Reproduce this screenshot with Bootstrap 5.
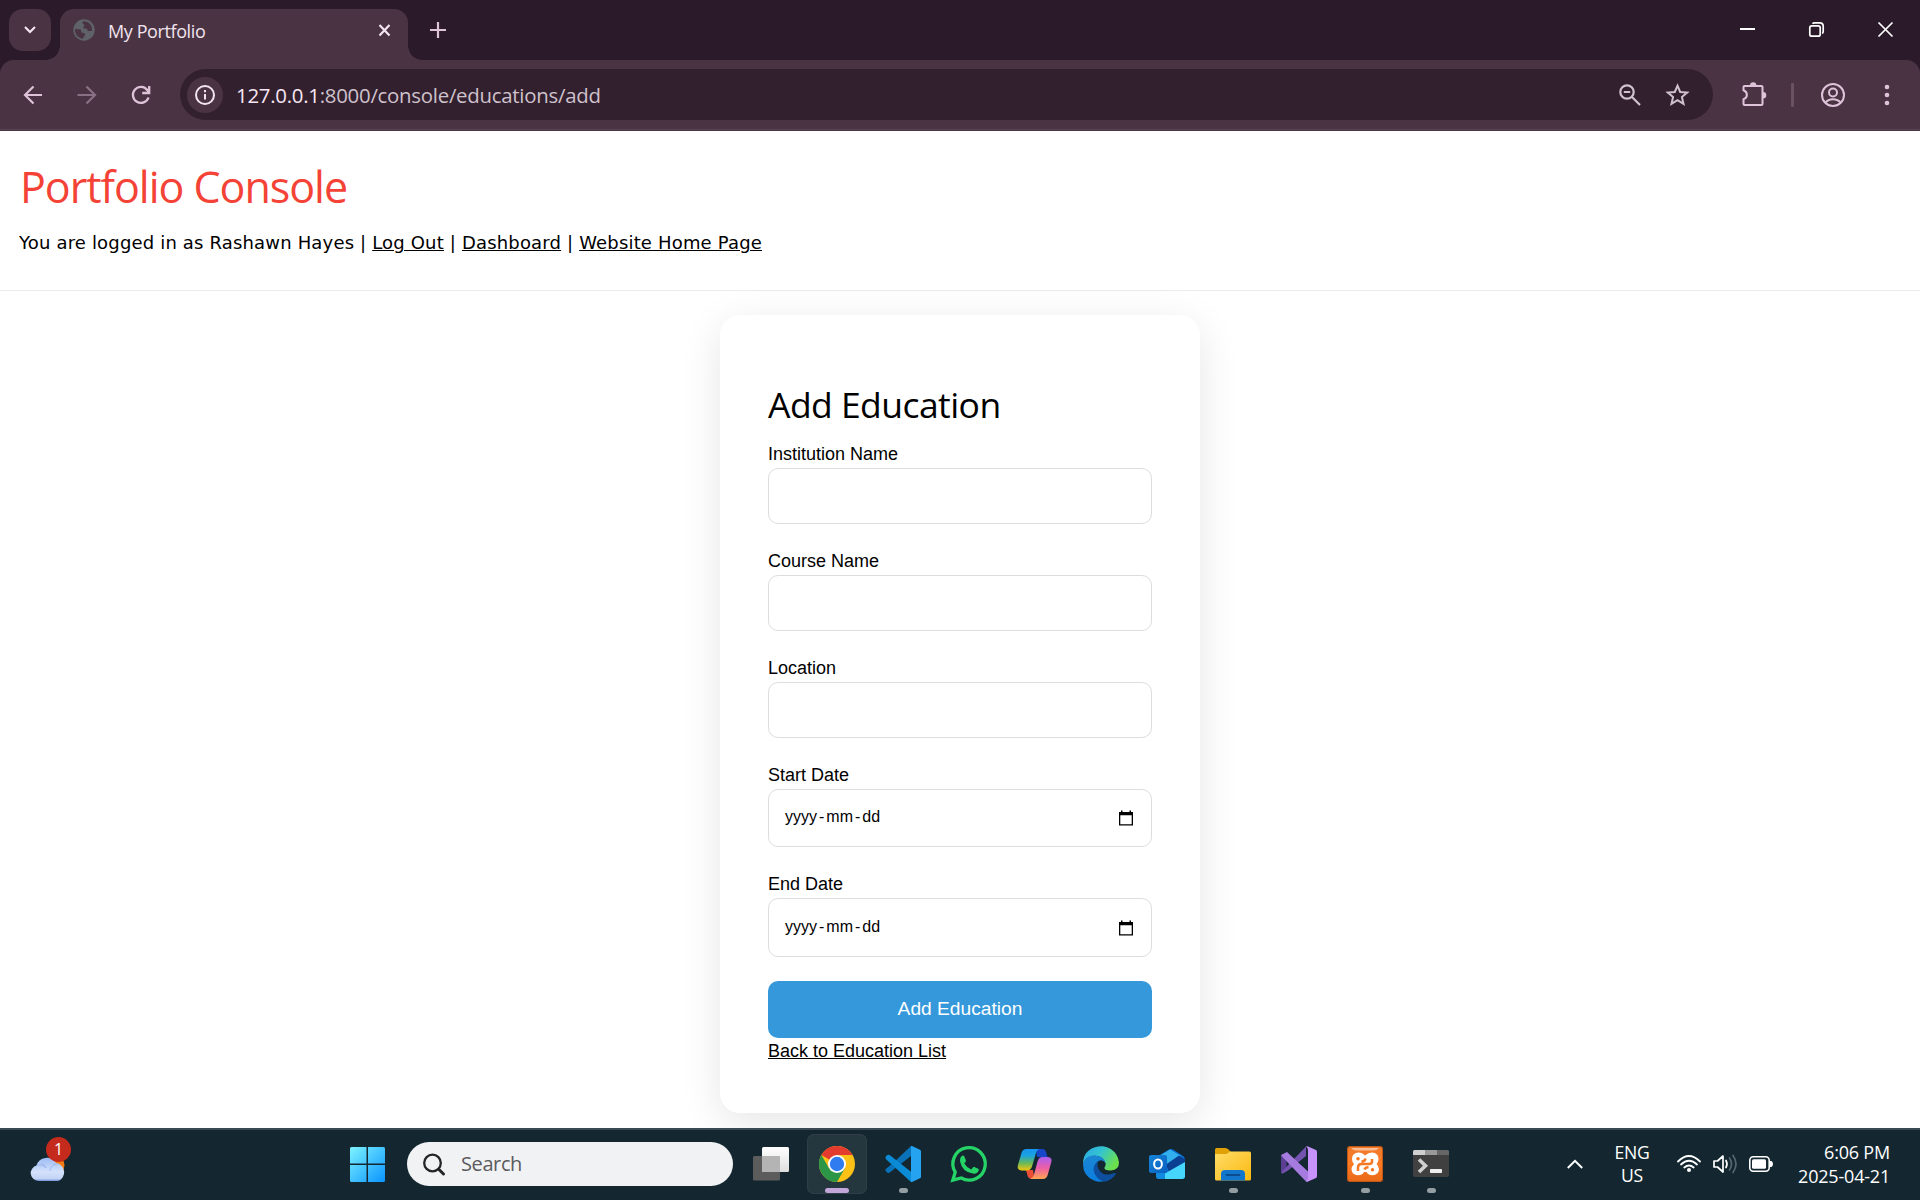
<!DOCTYPE html>
<html lang="en">
<head>
<meta charset="utf-8">
<meta name="viewport" content="width=device-width, initial-scale=1">
<title>My Portfolio</title>
<link href="https://cdn.jsdelivr.net/npm/bootstrap@5.3.0/dist/css/bootstrap.min.css" rel="stylesheet">
<style>
body{width:1920px;height:1200px;overflow:hidden;background:#fff;color:#000;font-family:"Open Sans","Noto Sans",sans-serif}
svg{display:block;flex:none;overflow:visible}
/* browser frame */
.tabstrip{height:60px;background:#2b1a29;padding:9px 0 0 9px}
.tab-search{width:42px;height:42px;border-radius:14px;background:#4a3444;margin-right:9px}
.tab-active{width:348px;height:51px;background:#4a3444;border-radius:14px 14px 0 0;padding:0 17px 0 13px;color:#f1e3ee;position:relative}
.tab-active::before,.tab-active::after{content:"";position:absolute;bottom:0;width:14px;height:14px}
.tab-active::before{left:-14px;background:radial-gradient(circle at 0 0,transparent 13.5px,#4a3444 14px)}
.tab-active::after{right:-14px;background:radial-gradient(circle at 100% 0,transparent 13.5px,#4a3444 14px)}
.tab-icon{margin-top:10px}
.tab-title{font-size:18px;letter-spacing:-.4px;line-height:24px;padding-top:3px;margin:7px 0 0 13px}
.tab-close{margin-top:15px}
.tab-new{margin:13px 0 0 22px}
.win-ctl{gap:54px;padding:13px 27px 0 0}
.toolbar-shell{height:71px;background:#2b1a29}
.toolbar{height:71px;background:#4a3444;border-radius:14px 14px 0 0;box-shadow:inset 0 -1px 0 #4a3444,inset 0 -2px 0 #594453;padding:9px 0 0}
.nav-icons{width:180px;padding-left:21px;gap:30px;height:51px}
.omnibox{width:1533px;height:51px;border-radius:26px;background:#33202f;padding:0 23px 0 7px}
.omni-actions{gap:25px}
.site-info{width:36px;height:36px;border-radius:50%;background:#4a3444}
.url{font-size:20.4px;letter-spacing:-.26px;line-height:28px;color:#cfc2cc;margin-left:13px}
.url b{font-weight:400;color:#f7e6f3}
.right-icons{width:207px;height:51px;padding-left:29px}
.tool-sep{width:3px;height:24px;background:#6a5263;border-radius:1px;margin:0 27px 0 24px}
.menu-dots{margin-left:39px}
/* page */
.site-page{height:997px;overflow:hidden}
.site-head{height:160px;padding:26px 20px 0;border-bottom:1px solid #e9ecec}
.site-head h1{font-size:43px;line-height:60px;letter-spacing:-1.02px;color:#f44336;margin:0 0 13px;font-weight:400}
.site-head p{font:18px/26px "DejaVu Sans",Verdana,sans-serif;letter-spacing:.17px;margin:0 0 0 -1px;white-space:nowrap}
.site-page a{color:#000;text-decoration:underline}
.edu-card{width:480px;height:798px;margin:24px auto 0;padding:48px;border-radius:20px;background:#fff;box-shadow:0 10px 40px rgba(0,0,0,.1);font-family:"Liberation Sans",Arial,sans-serif;font-size:18px;line-height:27px}
.edu-card h2{font:400 35.5px/48px "Open Sans",sans-serif;letter-spacing:-.55px;margin:17px 0 13px;white-space:nowrap}
.edu-card .form-label{display:block;margin:0;line-height:27px}
.edu-card .form-control{height:56px;border:1px solid #ddd;border-radius:10px;margin-bottom:24px;padding:0 18px 0 15px;font-size:16px;line-height:20px;color:#000}
.edu-card .date-a{height:58px;padding-bottom:3px}
.edu-card .date-b{height:59px;padding-bottom:2px}
.date-a svg,.date-b svg{margin-top:2px}
.date-text span{padding:0 1px}
.btn-add{height:57px;border:0;border-radius:10px;background:#3498db;color:#fff;font-size:19.2px;padding:0;display:block}
.btn-add:hover{background:#3498db;color:#fff}
/* taskbar */
.taskbar{height:72px;background:#142730;border-top:2px solid #3b4a52;color:#fff;padding-bottom:2px}
.icon-defs{position:absolute}
.zone-left{width:350px;padding:0 0 0 30px;height:70px}
.weather{width:37px;height:70px}
.weather-badge{position:absolute;left:16px;top:8px;width:25px;height:25px;border-radius:50%;background:#c42b1c;font-size:16px;line-height:24px;text-align:center}
.search-pill{width:326px;height:44px;border-radius:22px;background:#f1f2f4;margin:0 14px 0 22px;padding-left:16px;color:#5b5b5d;font-size:20px;letter-spacing:-.4px}
.search-pill span{margin-left:16px;line-height:26px}
.app-slot{width:60px;height:60px;border-radius:7px;margin-right:6px;position:relative}
.app-slot:first-child{margin-left:-6px}
.app-slot.active{background:#24363e;box-shadow:inset 0 0 0 1px #303f47}
.app-slot.run::after,.app-slot.active::after{content:"";position:absolute;left:26px;bottom:1px;width:9px;height:5px;border-radius:3px;background:#949da1}
.app-slot.active::after{left:18px;width:24px;background:#c3a6d9}
.tray{font-size:18px;letter-spacing:-.2px;padding-right:30px}
.lang{width:60px;margin:0 15px 0 19px;text-align:center;line-height:23px;font-size:17.6px;letter-spacing:-.3px}
.clock{width:117px;text-align:right;line-height:24px}
.tray-gap{margin-left:12px}
</style>
<script src="https://cdn.jsdelivr.net/npm/bootstrap@5.3.0/dist/js/bootstrap.bundle.min.js"></script>
</head>
<body>
<div class="tabstrip d-flex align-items-start">
  <div class="tab-search d-flex align-items-center justify-content-center">
    <svg width="12" height="8" viewBox="0 0 12 8" fill="none" stroke="#f3e5f0" stroke-width="2.2"><path d="M1 1l5 5 5-5"/></svg>
  </div>
  <div class="tab-active d-flex align-items-start">
    <svg class="tab-icon" width="22" height="22" viewBox="0 0 22 22"><circle cx="11" cy="11" r="10.7" fill="#5f6368"/><path d="M2.400 9.600C4 10.800 6 9.700 7.300 10.500c1.800 1 .2 2.300 1.700 3.100 1.500.8 3.300.3 3.100 2.200-.2 1.700-2 1.500-2 3.900C5.500 19.400 2 15.500 2 11zM10.300 2.200C9 3.600 9.500 5 10.600 5.200c1 .3 1 2.200-.1 2.500-.9.3-.5 2 1 1.800 1.700-.2 2.700.2 2.800 1.500.1 1.600 2.700 1.100 4.800.8C19.600 6.200 15.600 2 10.300 2.200z" fill="#4a3444"/></svg>
    <div class="tab-title flex-grow-1">My Portfolio</div>
    <svg class="tab-close" width="13" height="13" viewBox="0 0 13 13" stroke="#f3e5f0" stroke-width="2.200"><path d="M1.500 1l10 10.500M11.500 1l-10 10.500"/></svg>
  </div>
  <svg class="tab-new" width="16" height="16" viewBox="0 0 16 16" stroke="#dfc3d8" stroke-width="2.200"><path d="M8 0v16M0 8h16"/></svg>
  <div class="win-ctl ms-auto d-flex">
    <svg width="15" height="15" viewBox="0 0 15 15"><path d="M0 7h15" stroke="#fff" stroke-width="2"/></svg>
    <svg width="15" height="15" viewBox="0 0 15 15" fill="none" stroke="#fff" stroke-width="1.700"><rect x=".8" y="3.800" width="10.400" height="10.400" rx="2"/><path d="M3.500 1.700Q4.200.8 5.500.8h5.200q3.500 0 3.500 3.500v5.200q0 1.300-1 2"/></svg>
    <svg width="15" height="15" viewBox="0 0 15 15" stroke="#fff" stroke-width="1.700"><path d="M.5.5l14 14M14.500.5l-14 14"/></svg>
  </div>
</div>
<div class="toolbar-shell"><div class="toolbar d-flex">
  <div class="nav-icons d-flex align-items-center">
    <svg width="24" height="24" viewBox="0 0 24 24" fill="none" stroke="#dfc3d8" stroke-width="2.200"><path d="M21 12H4.500M12.500 3.500L4 12l8.500 8.500"/></svg>
    <svg width="24" height="24" viewBox="0 0 24 24" fill="none" stroke="#8a7084" stroke-width="2.200"><path d="M2.500 12H20M11.500 3.500L20 12l-8.500 8.500"/></svg>
    <svg width="24" height="24" viewBox="0 0 24 24" fill="none" stroke="#dfc3d8" stroke-width="2.300"><path d="M19.500 14.500A8 8 0 1 1 18.400 7.200l1.200 2"/><path d="M20.200 3v7h-7"/></svg>
  </div>
  <div class="omnibox d-flex align-items-center">
    <div class="site-info d-flex align-items-center justify-content-center"><svg width="20" height="20" viewBox="0 0 20 20" fill="none" stroke="#f3e5f0" stroke-width="2"><circle cx="10" cy="10" r="9"/><path d="M10 9v5.500M10 5v2.200"/></svg></div>
    <div class="url"><b>127.0.0.1</b>:8000/console/educations/add</div>
    <div class="omni-actions d-flex ms-auto align-items-center">
      <svg width="22" height="22" viewBox="0 0 22 22" fill="none" stroke="#cfc2cc" stroke-width="2.200"><circle cx="8" cy="8" r="6.700"/><path d="M13 13l8 8M4.800 8h6.400"/></svg>
      <svg width="24" height="24" viewBox="0 0 24 24" fill="none" stroke="#cfc2cc" stroke-width="2"><path d="M11.500 2.700l2.700 6.300 7 .6-5.300 4.500 1.600 6.700-6-3.600-6 3.600 1.600-6.700L1.800 9.600l7-.6z"/></svg>
    </div>
  </div>
  <div class="right-icons d-flex align-items-center">
    <svg width="25" height="25" viewBox="0 0 25 25" fill="none" stroke="#dfc3d8" stroke-width="2"><path d="M2.500 4H19.500a1 1 0 0 1 1 1V22a1 1 0 0 1-1 1H2.500q-1 0-1-1v-4.800c4.500-1.300 4.500-7.400 0-9V5q0-1 1-1z"/><path d="M8 3.500a3.200 3.200 0 0 1 6.400 0zM21 10a3.300 3.300 0 0 1 0 6.600z" fill="#dfc3d8" stroke="none"/></svg>
    <div class="tool-sep"></div>
    <svg width="24" height="24" viewBox="0 0 24 24" fill="none" stroke="#dfc3d8" stroke-width="2"><circle cx="12" cy="12" r="11"/><circle cx="12" cy="9.500" r="4"/><path d="M4.500 19.500c3.500-4.500 11.500-4.500 15 0"/></svg>
    <svg class="menu-dots" width="6" height="22" viewBox="0 0 6 22" fill="#dfc3d8"><circle cx="3" cy="3" r="2.300"/><circle cx="3" cy="11" r="2.300"/><circle cx="3" cy="19" r="2.300"/></svg>
  </div>
</div></div>

<div class="site-page">
  <header class="site-head">
    <h1>Portfolio Console</h1>
    <p>You are logged in as Rashawn Hayes | <a href="#">Log Out</a> | <a href="#">Dashboard</a> | <a href="#">Website Home Page</a></p>
  </header>
  <section class="edu-card">
    <h2>Add Education</h2>
    <form>
      <label class="form-label" for="institution">Institution Name</label>
      <input class="form-control" id="institution" type="text">
      <label class="form-label" for="course">Course Name</label>
      <input class="form-control" id="course" type="text">
      <label class="form-label" for="location">Location</label>
      <input class="form-control" id="location" type="text">
      <label class="form-label">Start Date</label>
      <div class="form-control date-a d-flex align-items-center justify-content-between"><div class="date-text"><span>yyyy</span><span>-</span><span>mm</span><span>-</span><span>dd</span></div>
        <svg width="14" height="16" viewBox="0 0 14 16"><path d="M0 2h2V.5h1.500V2h7V.5H12V2h2v13.500H0zM1.300 5.300v8.900h11.400V5.300z" fill-rule="evenodd"/></svg></div>
      <label class="form-label">End Date</label>
      <div class="form-control date-b d-flex align-items-center justify-content-between"><div class="date-text"><span>yyyy</span><span>-</span><span>mm</span><span>-</span><span>dd</span></div>
        <svg width="14" height="16" viewBox="0 0 14 16"><path d="M0 2h2V.5h1.500V2h7V.5H12V2h2v13.500H0zM1.300 5.300v8.900h11.400V5.300z" fill-rule="evenodd"/></svg></div>
      <button class="btn btn-add w-100" type="button">Add Education</button>
    </form>
    <a href="#" class="d-block">Back to Education List</a>
  </section>
</div>

<footer class="taskbar d-flex align-items-center">
  <svg class="icon-defs" width="0" height="0"><defs>
    <linearGradient id="gWin" x1="0" y1="0" x2="1" y2="1"><stop offset="0" stop-color="#7df3ff"/><stop offset="1" stop-color="#0a94ff"/></linearGradient>
    <linearGradient id="gCloud" x1="0" y1="0" x2="0" y2="1"><stop offset="0" stop-color="#9dbcf5"/><stop offset=".6" stop-color="#d3e1fb"/><stop offset=".9" stop-color="#c3d3f5"/><stop offset="1" stop-color="#6f92da"/></linearGradient>
    <linearGradient id="gTv" x1="0" y1="0" x2="0" y2="1"><stop offset="0" stop-color="#fff"/><stop offset="1" stop-color="#dedede"/></linearGradient>
    <linearGradient id="gCopA" x1="0" y1="0" x2="0" y2="1"><stop offset="0" stop-color="#1894f0"/><stop offset=".3" stop-color="#19a3e0"/><stop offset=".65" stop-color="#67b95a"/><stop offset="1" stop-color="#f5c60c"/></linearGradient>
    <linearGradient id="gCopB" x1="0" y1="0" x2="0" y2="1"><stop offset="0" stop-color="#a85ef0"/><stop offset=".5" stop-color="#ee5fa5"/><stop offset="1" stop-color="#ffa44f"/></linearGradient>
    <linearGradient id="gEdA" x1="0" y1="0" x2="1" y2=".5"><stop offset="0" stop-color="#2aa7e8"/><stop offset=".5" stop-color="#34c4cf"/><stop offset="1" stop-color="#6be04d"/></linearGradient>
    <linearGradient id="gEdB" x1="0" y1="0" x2="0" y2="1"><stop offset="0" stop-color="#1b86d2"/><stop offset="1" stop-color="#0a7fe0"/></linearGradient>
    <linearGradient id="gFold" x1="0" y1="0" x2="1" y2="1"><stop offset="0" stop-color="#ffdc68"/><stop offset="1" stop-color="#fbb910"/></linearGradient>
    <linearGradient id="gXam" x1="0" y1="0" x2="0" y2="1"><stop offset="0" stop-color="#f07a2d"/><stop offset=".5" stop-color="#fb7a24"/><stop offset="1" stop-color="#e96a18"/></linearGradient>
    <linearGradient id="gOut" x1="0" y1="0" x2="1" y2="1"><stop offset="0" stop-color="#1684d8"/><stop offset="1" stop-color="#0a5fc0"/></linearGradient>
  </defs></svg>
  <div class="zone-left"><div class="weather position-relative">
    <svg width="37" height="70" viewBox="0 0 37 70"><circle cx="25" cy="36" r="9.500" fill="#f57c0f"/><path d="M9 52a8.800 8 0 0 1-2.500-15.500A10.800 10.800 0 0 1 26 34 9.300 9.300 0 0 1 28 52z" fill="url(#gCloud)"/><path d="M6 36.500c4-1.200 8 0 10 2.500-.5-2.500-3-4.300-5-4.300M20 42c0-5 4-7 7.500-7" fill="none" stroke="#8eaced" stroke-width="1" opacity=".7"/></svg>
    <span class="weather-badge">1</span>
  </div></div>
  <svg width="35" height="35" viewBox="0 0 35 35"><path d="M1.500 0H16.500V16.500H0V1.500Q0 0 1.500 0zM18 0H33.500Q35 0 35 1.500V16.500H18zM0 18H16.500V35H1.500Q0 35 0 33.500zM18 18H35V33.500Q35 35 33.500 35H18z" fill="url(#gWin)"/></svg>
  <div class="search-pill d-flex align-items-center"><svg width="22" height="23" viewBox="0 0 22 23" fill="none" stroke="#252525" stroke-width="2.300" stroke-linecap="round"><circle cx="9.500" cy="10" r="8.300"/><path d="M16 16.500l4.500 4.500" stroke-width="3"/></svg><span>Search</span></div>
  <div class="d-flex">
    <div class="app-slot"><svg width="60" height="60" viewBox="0 0 60 60"><g transform="translate(12 13)"><rect x="0" y="9" width="27" height="24.500" rx="1.500" fill="#5c5c5c"/><rect x="9" y="0" width="27" height="25" rx="1.500" fill="url(#gTv)"/><path d="M9 9h18v16H9z" fill="#b4b4b4"/></g></svg></div>
    <div class="app-slot active"><svg width="60" height="60" viewBox="0 0 60 60"><g transform="translate(12 12)"><circle cx="18" cy="18" r="18" fill="#fbc116"/><path d="M18 18L2.400 9A18 18 0 0 1 33.600 9H18z" fill="#e33b2e"/><path d="M2.400 9A18 18 0 0 0 18 36L25.800 22.500 18 18 10.200 22.500z" fill="#2c9647"/><circle cx="18" cy="18" r="9" fill="#fff"/><circle cx="18" cy="18" r="7.200" fill="#2f7cf0"/></g></svg></div>
    <div class="app-slot run"><svg width="60" height="60" viewBox="0 0 60 60"><g transform="translate(12 12)"><path d="M26 0L7 18 1 22.700Q-.2 24 .8 25.300L2.500 26.700Q3.700 27.500 5 26.300L26 10z" fill="#0a72b8"/><path d="M1 10.300L2.500 9Q4 8.500 5 9.300L26 25.700V36L1 13.300Q-.3 11.800 1 10.300z" fill="#0b8ad6"/><path d="M26 0q.8-.3 1.500.2L35 3.700q1 .5 1 1.500v25.600q0 1-1 1.500L27.500 35.800q-.8.400-1.500 0z" fill="#25a2f0"/></g></svg></div>
    <div class="app-slot"><svg width="60" height="60" viewBox="0 0 60 60"><g transform="translate(12 12)"><path d="M1.800 34.200L4.200 26.200A16.200 16.200 0 1 1 10.200 32z" fill="none" stroke="#25d366" stroke-width="3.300"/><path d="M12 9.500q.8 0 1.200.8l1.700 4q.3.800-.3 1.500l-1.300 1.600q2.500 4.300 7 6l1.800-2.200q.5-.6 1.300-.3l3.800 1.900q.8.400.6 1.200-.8 3.500-5 3.700Q11 26.500 9 15q0-5 3-5.500z" fill="#25d366"/></g></svg></div>
    <div class="app-slot"><svg width="60" height="60" viewBox="0 0 60 60"><g transform="translate(13 15)"><path d="M18 0H24.500Q27 0 28 3l1.500 5H19z" fill="#1747c8"/><path d="M8 21H15L16.500 30H14Q10.500 30 9.500 26.500z" fill="#e94f35"/><path d="M8.500 0H21Q18.800 1.200 18 4L14 17.500Q12.700 21.500 9 21.500H3.500Q-1 21-.2 16.500L3.500 4Q4.700 0 8.500 0z" fill="url(#gCopA)"/><path d="M25 30H12.500Q15 29 16 25.500L19.700 12Q21 8 24.500 8H30Q34.500 8.500 33.300 13L29.700 26Q28.500 30 25 30z" fill="url(#gCopB)"/></g></svg></div>
    <div class="app-slot"><svg width="60" height="60" viewBox="0 0 60 60"><g transform="translate(12 12)"><path d="M0 18Q0 5 12 1.200A18 18 0 0 1 36 16.500Q36 24 28 24.500 20.500 24.500 21.500 21.500 23.500 19.500 22.500 17 19 8 8.500 10 2 12 0 18z" fill="url(#gEdA)"/><path d="M0 18Q1.500 9.500 11.500 9.400 21 9.500 22.500 17 19.500 13 15.500 15 10.500 18.500 12.500 25.500 15 32 22 34.500 17.500 37 11 34.500 0 30 0 18z" fill="url(#gEdB)"/><path d="M15.500 15Q8.500 19 11.500 27.500 14.500 34 21 35.700 28 35 33 28 33 26.500 31.500 27 20 31.500 15.500 23 13.500 18.500 15.500 15z" fill="#0d4f9e"/></g></svg></div>
    <div class="app-slot"><svg width="60" height="60" viewBox="0 0 60 60"><g transform="translate(12 12)"><path d="M7 14Q7 11.500 9 10L20 3.500Q22 2.500 24 3.500L34 10Q36 11.500 36 14V30Q36 33 33 33H10Q7 33 7 30z" fill="#0b6fd0"/><path d="M12 9L21 3.500 32 10 17 19z" fill="#32b0ee"/><path d="M17 18.500L30 9.500 36 13.500V17L20 25.500z" fill="#0a3f91"/><path d="M36 16L15 28 9 32.500 11 33H33Q36 33 36 30z" fill="#46d6fb"/><path d="M7 20L16 27 16 33H10Q7 33 7 30z" fill="#118ae0"/><rect y="9" width="18" height="18" rx="2" fill="url(#gOut)"/><ellipse cx="9" cy="18" rx="3.900" ry="4.600" fill="none" stroke="#fff" stroke-width="2"/></g></svg></div>
    <div class="app-slot run"><svg width="60" height="60" viewBox="0 0 60 60"><g transform="translate(12 14)"><path d="M0 1.500Q0 0 1.500 0H10.500Q12 0 13.500 1.500L16 4V12H0z" fill="#e0a106"/><path d="M0 6H11Q12 6 13 5L15 3.500H34.500Q36 3.500 36 5V31Q36 32.500 34.500 32.500H1.500Q0 32.500 0 31z" fill="url(#gFold)"/><path d="M6 32.500V26Q6 22 10 22H26Q30 22 30 26V32.500z" fill="#1176cc"/><path d="M11.500 27h13" stroke="#0b4b8e" stroke-width="1.800" stroke-linecap="round"/></g></svg></div>
    <div class="app-slot"><svg width="60" height="60" viewBox="0 0 60 60"><g transform="translate(12 12)"><path d="M0 9.500L5.500 14V22.500L0 26.500z" fill="#5a3e92"/><path d="M0 26.500L25 .5V10L7 24.500 1.500 27.800z" fill="#7452b0"/><path d="M0 9.500Q.5 8.500 1.500 8.200L6 6 27 25.500V35.500L25 35.500z" fill="#a57be0"/><path d="M25 .5Q26 0 27 .5L35 4Q36 4.700 36 6V30Q36 31.500 35 32L27 35.600Q26 36 25 35.500 27 34.500 27 32V4Q27 1.500 25 .5z" fill="#c892fb"/></g></svg></div>
    <div class="app-slot run"><svg width="60" height="60" viewBox="0 0 60 60"><g transform="translate(12 12)"><rect width="36" height="36" rx="3" fill="#bd5716"/><rect x="1" y="1" width="34" height="34" rx="2.500" fill="url(#gXam)"/><path d="M4 2H32Q30 4.500 26 4.500H10Q6 4.500 4 2z" fill="#f9bc93"/><path d="M18 9.500Q15.500 6.500 11.500 6.500 5 7 5 13q0 3 2 5-2.500 2.500-2.500 5.500Q5 29 11 29.300q4.300 0 6-3.300h2.500q2 3.300 6 3.300 6-.3 6.500-6 0-3-2.500-5.300 2-2 2-5Q31.500 7 25 6.500 21 6.500 18 9.500z" fill="#fff"/><path d="M11 25v-3.500q0-3.500 3.500-3.500H22q3 0 3-2.500v-2.500M18.500 12.500q-.5 3-4 3M17.500 23.500q.8-2.300 4-2.300" fill="none" stroke="#f77823" stroke-width="2.500"/><circle cx="11" cy="12.800" r="1.800" fill="#f77823"/><circle cx="25.500" cy="23.800" r="1.800" fill="#f77823"/></g></svg></div>
    <div class="app-slot run"><svg width="60" height="60" viewBox="0 0 60 60"><g transform="translate(12 16)"><rect width="36" height="27" rx="2" fill="#404040"/><path d="M0 5V1.500Q0 0 1.500 0H12V5z" fill="#cfcfcf"/><path d="M12 0H24V5H12z" fill="#999"/><path d="M24 0H34.500Q36 0 36 1.500V5H24z" fill="#666"/><path d="M6 9.500l6.500 6.200L6 22" fill="none" stroke="#cfcfcf" stroke-width="3.600"/><rect x="17" y="19" width="12" height="4" rx=".7" fill="#eee"/></g></svg></div>
  </div>
  <div class="tray d-flex align-items-center ms-auto">
    <svg width="16" height="10" viewBox="0 0 16 10" fill="none" stroke="#fff" stroke-width="2"><path d="M.8 9L8 1.800 15.200 9"/></svg>
    <div class="lang">ENG<br>US</div>
    <svg width="24" height="18" viewBox="0 0 24 18" fill="none" stroke="#fff" stroke-width="1.800" stroke-linecap="round"><path d="M1 6.500Q12-4.500 23 6.500M4 9.500q8-7.500 16 0M7.300 12.500q4.700-4 9.400 0"/><circle cx="12" cy="15" r="2" fill="#fff" stroke="none"/></svg>
    <svg class="tray-gap" width="24" height="20" viewBox="0 0 24 20" fill="none" stroke="#fff" stroke-width="1.700" stroke-linecap="round" stroke-linejoin="round"><path d="M1 7v6h3.500L10 18V2L4.500 7zM13 6.500q2 3.500 0 7"/><path d="M16.500 4q4 6 0 12M20 1.500q6 8.500 0 17" stroke="#566670"/></svg>
    <svg class="tray-gap" width="24" height="16" viewBox="0 0 24 16"><rect x=".8" y=".8" width="19.400" height="14.400" rx="3.500" fill="none" stroke="#fff" stroke-width="1.600"/><rect x="3" y="3.300" width="14" height="9.400" rx="1.500" fill="#fff"/><path d="M21 5h1.500q1.500 1 1.500 3t-1.500 3H21z" fill="#fff"/></svg>
    <div class="clock">6:06 PM<br>2025-04-21</div>
  </div>
</footer>
</body>
</html>
